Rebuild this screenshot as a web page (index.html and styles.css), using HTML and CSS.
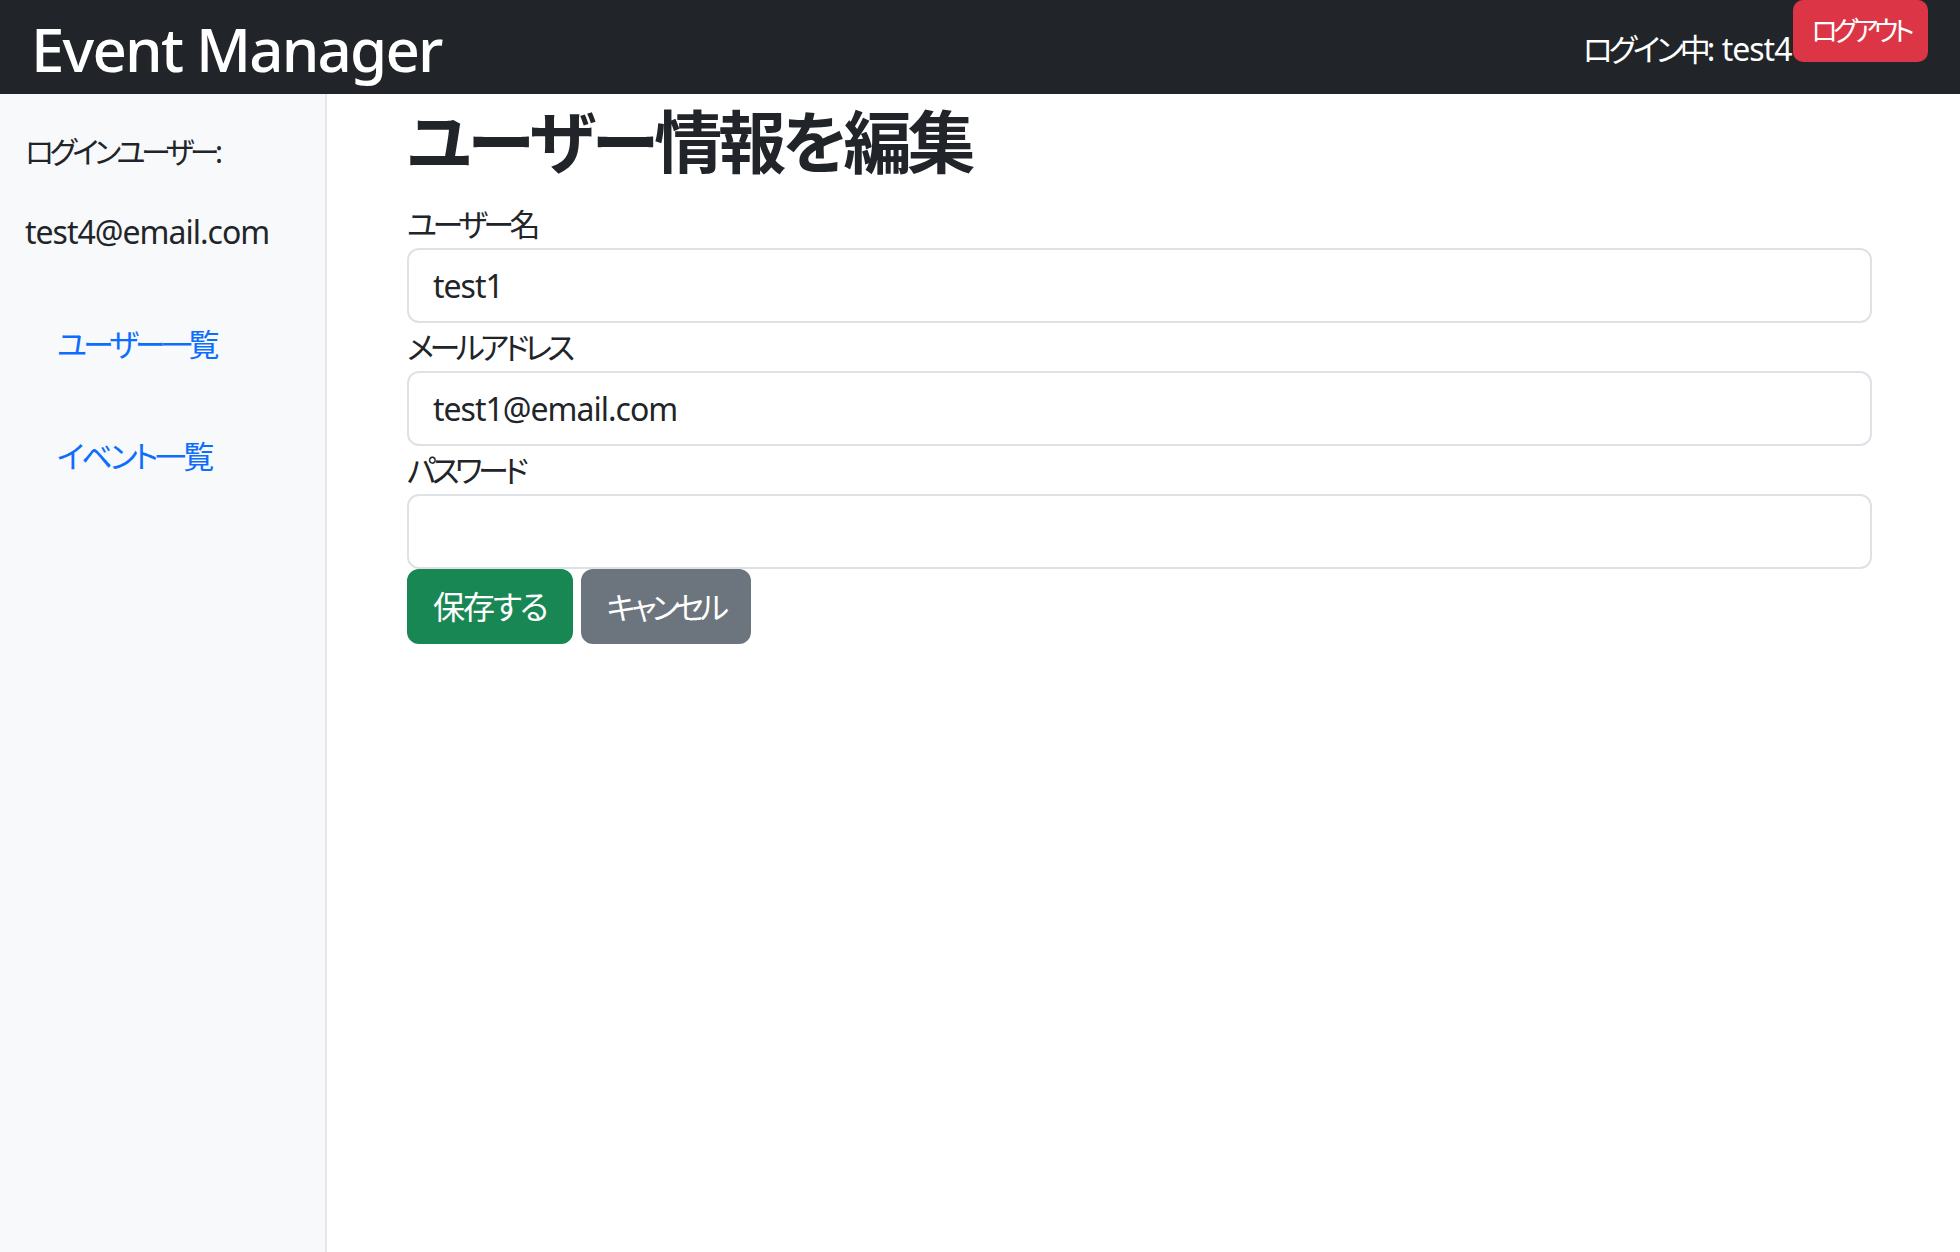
FILE: index.html
```html
<!DOCTYPE html>
<html lang="ja">
<head>
<meta charset="utf-8">
<title>Event Manager</title>
<link rel="stylesheet" href="styles.css">
</head>
<body>
<header class="topbar">
  <div class="brand">Event Manager</div>
  <div class="userbox">
    <span class="login-as"><span class="ja-tight">ログイン中</span>: test4</span>
    <button class="btn btn-logout" type="button">ログアウト</button>
  </div>
</header>
<div class="layout">
  <aside class="sidebar">
    <p class="side-text side-label">ログインユーザー:</p>
    <p class="side-text side-email">test4@email.com</p>
    <ul class="side-nav">
      <li><a class="side-link link-users" href="#">ユーザー一覧</a></li>
      <li><a class="side-link link-events" href="#">イベント一覧</a></li>
    </ul>
  </aside>
  <main class="main">
    <h1 class="page-title">ユーザー情報を編集</h1>
    <form class="edit-form">
      <label class="field-label" for="name">ユーザー名</label>
      <input class="field-input" id="name" type="text" value="test1">
      <label class="field-label" for="email">メールアドレス</label>
      <input class="field-input" id="email" type="email" value="test1@email.com">
      <label class="field-label" for="password">パスワード</label>
      <input class="field-input" id="password" type="password" value="">
      <div class="actions">
        <button class="btn btn-save" type="submit">保存する</button>
        <button class="btn btn-cancel" type="button">キャンセル</button>
      </div>
    </form>
  </main>
</div>
</body>
</html>
```
FILE: styles.css
```css
* { box-sizing: border-box; }
html, body { margin: 0; padding: 0; }
body {
  font-family: "Noto Sans", "Noto Sans CJK JP", sans-serif;
  font-feature-settings: "palt";
  font-size: 32px;
  line-height: 48px;
  color: #212529;
  background: #fff;
  width: 1960px;
  min-height: 1252px;
}
.topbar {
  height: 94px;
  background: #212529;
  display: flex;
  justify-content: space-between;
  align-items: flex-start;
  padding: 0 32px 0 31px;
}
.brand {
  color: #fff;
  font-size: 60px;
  font-weight: 500;
  line-height: 72px;
  margin-top: 13px;
  letter-spacing: -1.8px;
}
.userbox {
  display: flex;
  align-items: flex-start;
}
.login-as {
  color: #fff;
  margin-top: 25px;
  letter-spacing: -1px;
  margin-right: 2px;
}
.ja-tight {
  font-size: 31px;
  letter-spacing: -4px;
}
.btn {
  font-family: inherit;
  font-feature-settings: "palt";
  border: 2px solid transparent;
  border-radius: 12px;
  color: #fff;
  cursor: pointer;
}
.btn-logout {
  background: #dc3545;
  border-color: #dc3545;
  font-size: 27px;
  line-height: 42px;
  padding: 8px 16px;
  border-radius: 10px;
  letter-spacing: -4.5px;
}
.layout {
  display: flex;
  min-height: 1158px;
}
.sidebar {
  width: 327px;
  flex: 0 0 327px;
  background: #f8f9fa;
  border-right: 2px solid #e5e7ea;
  padding: 34px 0 0 25px;
}
.side-text {
  margin: 0 0 32px;
}
.side-label { font-size: 30px; letter-spacing: -4.5px; }
.side-email { letter-spacing: -1px; }
.side-nav {
  list-style: none;
  margin: 0;
  padding: 0;
}
.side-link {
  display: block;
  padding: 32px;
  color: #0d6efd;
  text-decoration: none;
  font-size: 31px;
}
.link-users { letter-spacing: -4px; }
.link-events { letter-spacing: -3px; }
.main {
  flex: 1;
  padding: 0 88px 0 80px;
}
.page-title {
  font-size: 68px;
  font-weight: 700;
  line-height: 88px;
  margin: 4px 0 14px;
  letter-spacing: -4px;
}
.edit-form {
  display: flex;
  flex-direction: column;
  align-items: flex-start;
}
.field-label {
  display: block;
  font-size: 31px;
  letter-spacing: -4.5px;
}
.field-input {
  display: block;
  width: 100%;
  height: 75px;
  font-family: inherit;
  font-size: 32px;
  line-height: 48px;
  letter-spacing: -1px;
  color: #212529;
  padding: 12px 24px;
  border: 2px solid #dee2e6;
  border-radius: 12px;
  background: #fff;
  outline: none;
}
.actions {
  display: flex;
  gap: 8px;
}
.btn-save, .btn-cancel {
  line-height: 48px;
  padding: 12px 24px;
  height: 75px;
}
.btn-save { background: #198754; border-color: #198754; font-size: 32px; letter-spacing: -2px; }
.btn-cancel { background: #6c757d; border-color: #6c757d; font-size: 31px; letter-spacing: -4.5px; }
```
